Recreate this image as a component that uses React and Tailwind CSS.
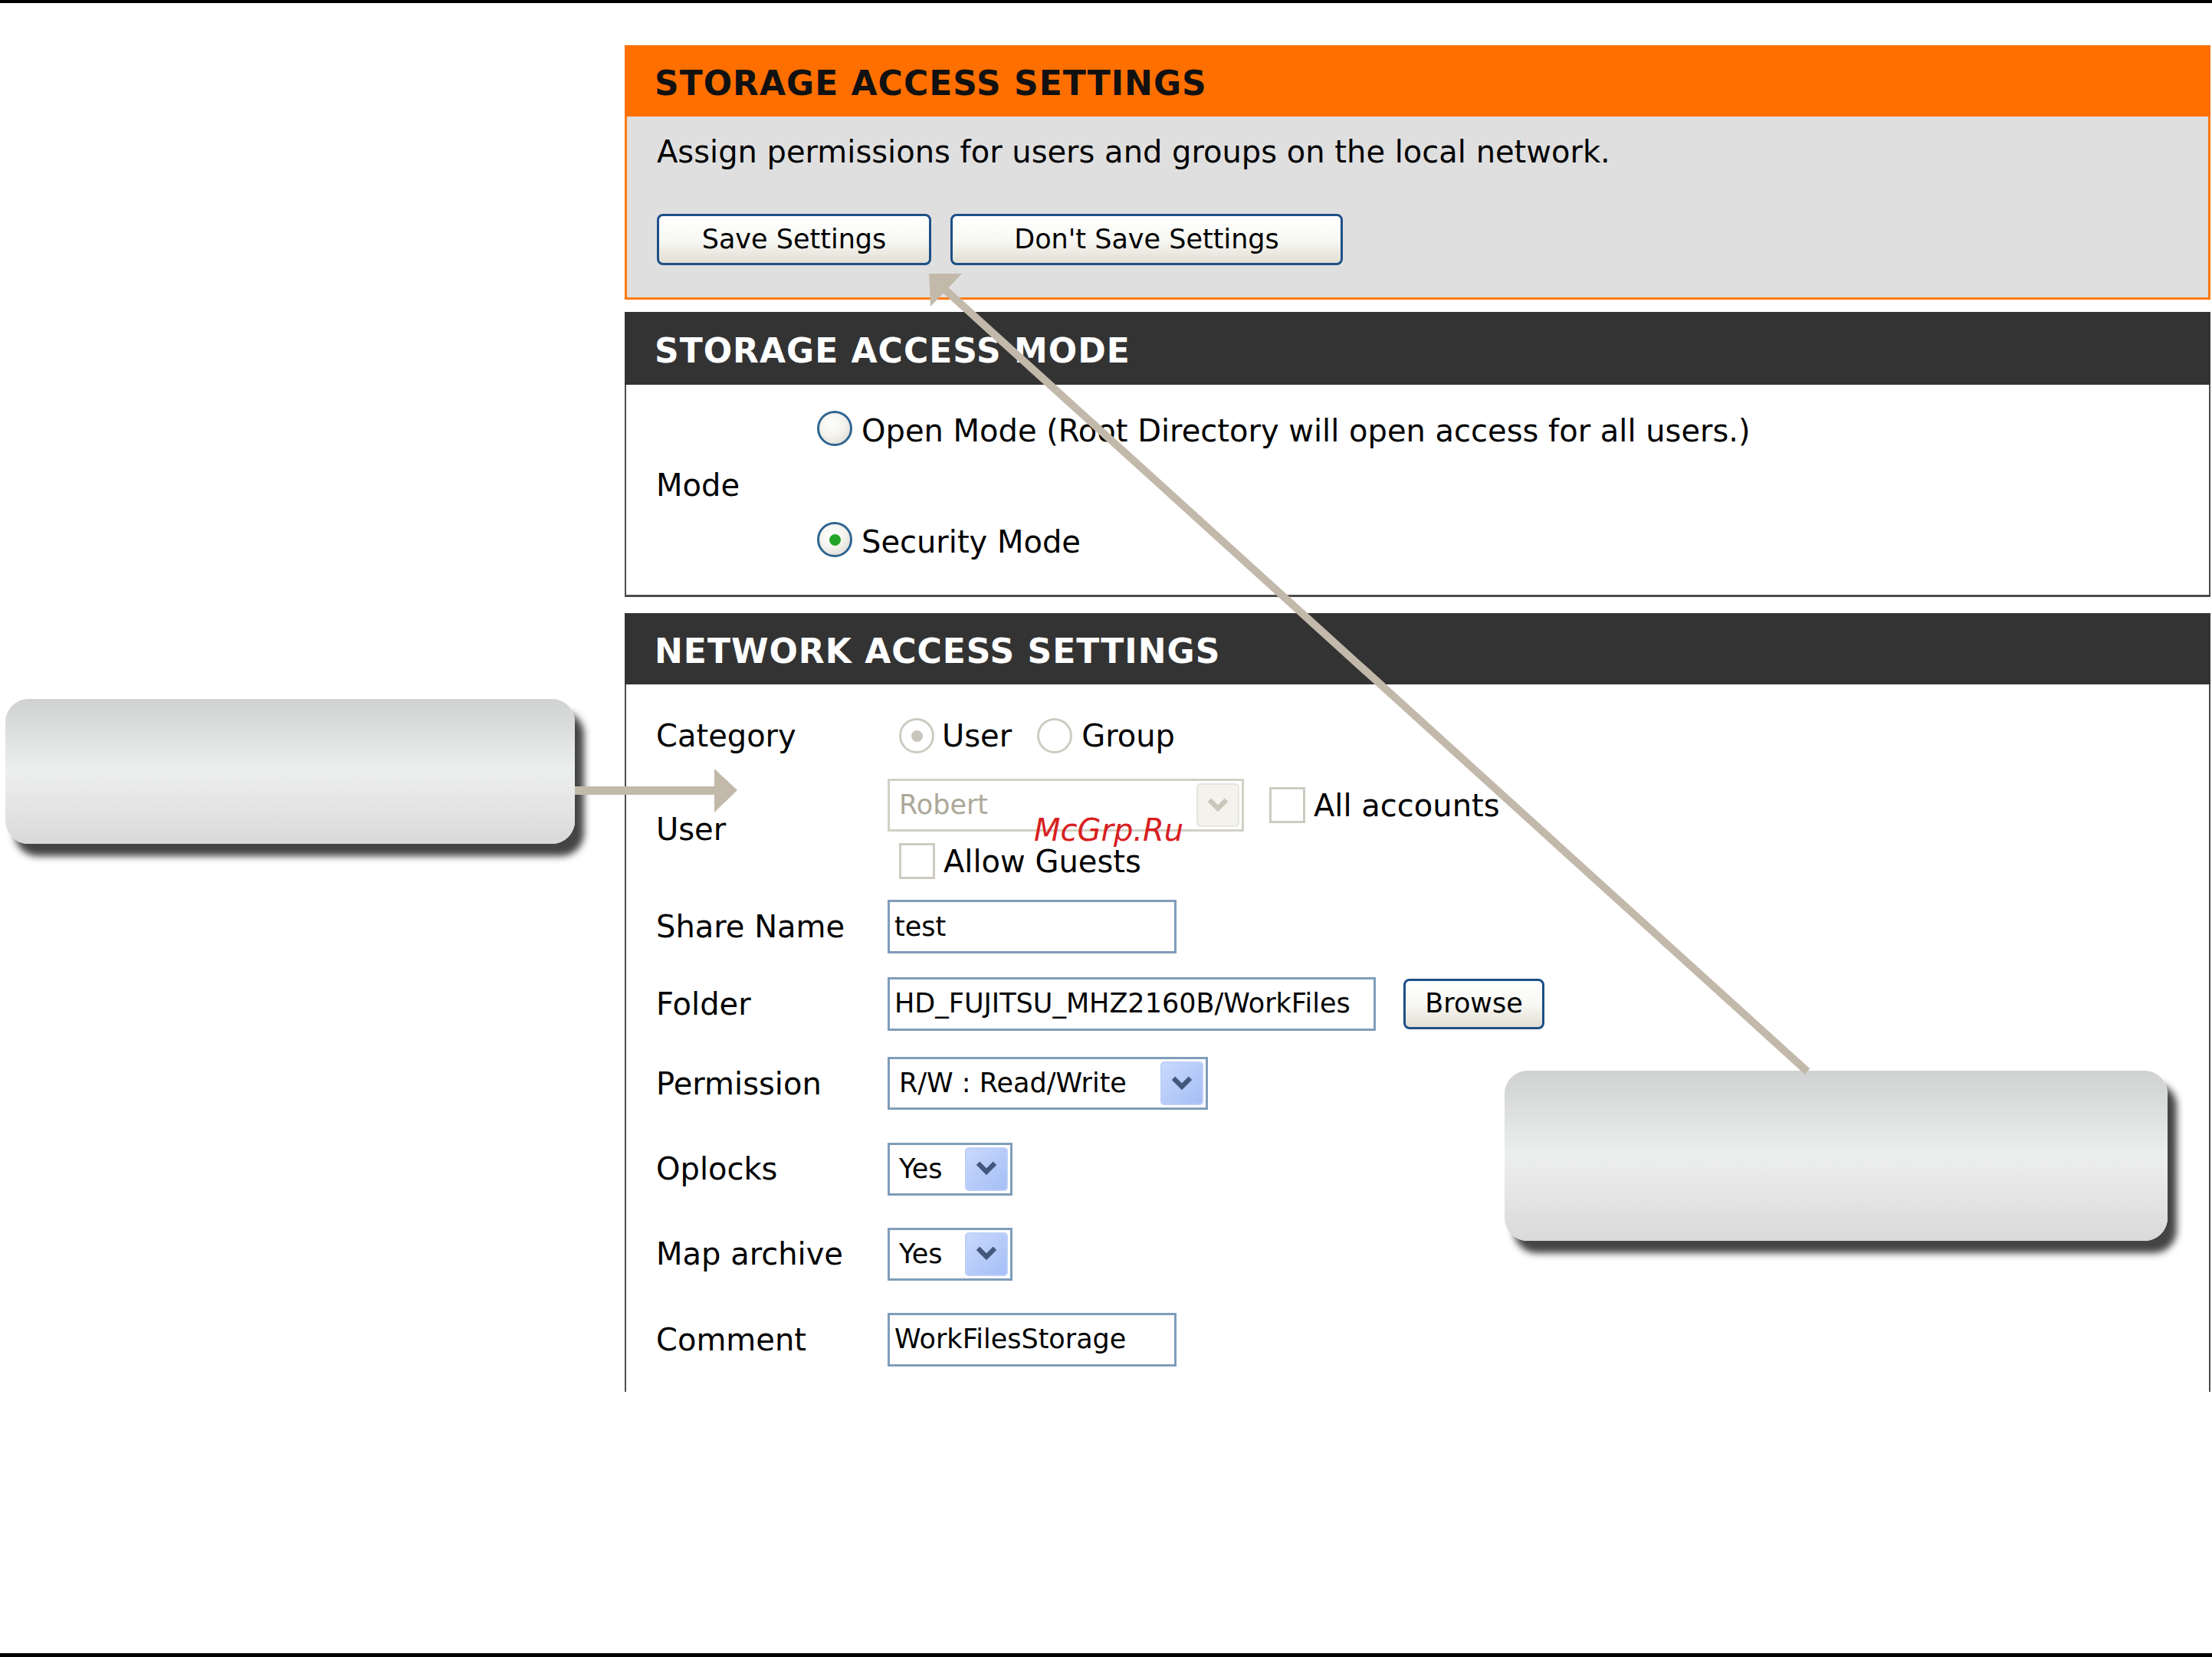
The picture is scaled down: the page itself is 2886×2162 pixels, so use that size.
import React from "react";

const FONT = { fontFamily: '"DejaVu Sans", Verdana, sans-serif' };

function Title({ children }) {
  return (
    <h2 className="text-[44px] font-bold tracking-[1px] leading-none pt-[6px]">
      {children}
    </h2>
  );
}

function Radio({ checked, disabled }) {
  const ring = disabled
    ? "border-[#cdcbc0] bg-white"
    : "border-[#2f6490] bg-[radial-gradient(circle_at_40%_35%,#ffffff_0%,#f4f3ee_45%,#d6d4cb_100%)]";
  return (
    <span
      className={`w-[46px] h-[46px] rounded-full border-[3px] flex items-center justify-center shrink-0 ${ring}`}
    >
      {checked && (
        <span
          className={`w-[15px] h-[15px] rounded-full ${
            disabled ? "bg-[#c8c6bc]" : "bg-[#22a529]"
          }`}
        />
      )}
    </span>
  );
}

function Checkbox() {
  return (
    <span className="block w-[47px] h-[47px] border-[3px] border-[#cdcbc0] bg-white shrink-0" />
  );
}

function Chevron({ color }) {
  return (
    <svg viewBox="0 0 24 24" className="w-[30px] h-[30px]">
      <path d="M5 8 L12 15 L19 8" fill="none" stroke={color} strokeWidth="5" strokeLinecap="square" />
    </svg>
  );
}

function Select({ value, width, disabled }) {
  return (
    <div
      className={`h-[69px] border-[3px] flex items-center justify-between pl-[12px] pr-[3px] ${
        disabled ? "border-[#d2d0c4] bg-white" : "border-[#7f9db9] bg-white"
      }`}
      style={{ width }}
    >
      <span className={`text-[35px] leading-none ${disabled ? "text-[#aca899]" : "text-black"}`}>
        {value}
      </span>
      <span
        className={`w-[56px] h-[57px] rounded-[5px] flex items-center justify-center ${
          disabled
            ? "bg-[#f3f2ec] border-2 border-[#e6e5dd]"
            : "bg-gradient-to-br from-[#c9d9fc] to-[#a5bef5] border-2 border-[#bccff9]"
        }`}
      >
        <Chevron color={disabled ? "#c9c7ba" : "#44577d"} />
      </span>
    </div>
  );
}

function Input({ value, width }) {
  return (
    <div
      className="h-[70px] border-[3px] border-[#7f9db9] bg-white flex items-center pl-[6px] overflow-hidden whitespace-nowrap"
      style={{ width }}
    >
      <span className="text-[35px] leading-none text-black">{value}</span>
    </div>
  );
}

function XpButton({ children, className = "" }) {
  return (
    <button
      className={`border-[3px] border-[#1d4f86] rounded-[8px] bg-gradient-to-b from-white via-[#f8f8f4] to-[#e2dfd3] text-[35px] leading-none text-black flex items-center justify-center ${className}`}
    >
      {children}
    </button>
  );
}

function Row({ label, top, height, children }) {
  return (
    <div className="flex items-center" style={{ marginTop: top, height }}>
      <div className="w-[302px] shrink-0 text-[40px] leading-none">{label}</div>
      {children}
    </div>
  );
}

export default function App() {
  return (
    <div className="relative w-[2886px] h-[2162px] bg-white text-black overflow-hidden" style={FONT}>
      <div className="h-[4px] bg-black" />

      <div className="ml-[815px] mt-[55px] w-[2069px]">
        {/* storage access settings */}
        <div className="h-[93px] bg-[#ff6f00] flex items-center pl-[39px] text-[#111]">
          <Title>STORAGE ACCESS SETTINGS</Title>
        </div>
        <div className="h-[239px] bg-[#dfdfdf] border-x-[3px] border-b-[3px] border-[#ff7a12] pl-[39px] pt-[22px]">
          <p className="text-[40px] leading-[48px]">
            Assign permissions for users and groups on the local network.
          </p>
          <div className="flex gap-[25px] mt-[57px]">
            <XpButton className="w-[358px] h-[67px]">Save Settings</XpButton>
            <XpButton className="w-[512px] h-[67px]">Don't Save Settings</XpButton>
          </div>
        </div>

        {/* storage access mode */}
        <div className="mt-[16px] h-[95px] bg-[#333333] flex items-center pl-[39px] text-white">
          <Title>STORAGE ACCESS MODE</Title>
        </div>
        <div className="h-[277px] border-x-2 border-b-[3px] border-[#4d4d4d] pl-[39px] pt-[33px] flex items-start">
          <div className="w-[210px] shrink-0 text-[40px] leading-none mt-[78px]">Mode</div>
          <div className="flex flex-col gap-[97px]">
            <label className="flex items-center gap-[12px] h-[48px] text-[40px] leading-none">
              <Radio />
              <span className="pt-[5px]">Open Mode (Root Directory will open access for all users.)</span>
            </label>
            <label className="flex items-center gap-[12px] h-[48px] text-[40px] leading-none">
              <Radio checked />
              <span className="pt-[5px]">Security Mode</span>
            </label>
          </div>
        </div>

        {/* network access settings */}
        <div className="mt-[21px] h-[93px] bg-[#333333] flex items-center pl-[39px] text-white">
          <Title>NETWORK ACCESS SETTINGS</Title>
        </div>
        <div className="h-[923px] border-x-2 border-[#4d4d4d] pl-[39px] flex flex-col">
          <Row label="Category" top={44} height={46}>
            <div className="flex items-center pl-[15px] text-[40px] leading-none">
              <Radio checked disabled />
              <span className="ml-[10px]">User</span>
              <span className="ml-[33px]">
                <Radio disabled />
              </span>
              <span className="ml-[12px]">Group</span>
            </div>
          </Row>

          <Row label="User" top={32} height={133}>
            <div className="flex flex-col gap-[15px]">
              <div className="flex items-center">
                <Select value="Robert" width={465} disabled />
                <span className="ml-[33px]">
                  <Checkbox />
                </span>
                <span className="ml-[11px] text-[40px] leading-none">All accounts</span>
              </div>
              <div className="flex items-center pl-[15px]">
                <Checkbox />
                <span className="ml-[11px] text-[40px] leading-none">Allow Guests</span>
              </div>
            </div>
          </Row>

          <Row label="Share Name" top={26} height={70}>
            <Input value="test" width={377} />
          </Row>

          <Row label="Folder" top={30} height={71}>
            <Input value="HD_FUJITSU_MHZ2160B/WorkFiles" width={637} />
            <XpButton className="ml-[36px] w-[184px] h-[66px]">Browse</XpButton>
          </Row>

          <Row label="Permission" top={34} height={69}>
            <Select value="R/W : Read/Write" width={418} />
          </Row>

          <Row label="Oplocks" top={42} height={70}>
            <Select value="Yes" width={163} />
          </Row>

          <Row label="Map archive" top={41} height={70}>
            <Select value="Yes" width={163} />
          </Row>

          <Row label="Comment" top={41} height={71}>
            <Input value="WorkFilesStorage" width={377} />
          </Row>
        </div>
      </div>

      <div className="absolute left-0 right-0 bottom-0 h-[5px] bg-black" />

      {/* callout boxes */}
      <div className="absolute left-[7px] top-[912px] w-[743px] h-[189px] rounded-[30px] bg-gradient-to-b from-[#d0d1d1] via-[#edefee] to-[#d9d9d9] shadow-[12px_16px_10px_rgba(35,35,35,0.85)]" />
      <div className="absolute left-[1963px] top-[1397px] w-[865px] h-[222px] rounded-[30px] bg-gradient-to-b from-[#d0d1d1] via-[#edefee] to-[#d9d9d9] shadow-[12px_16px_10px_rgba(35,35,35,0.85)]" />

      {/* arrows */}
      <svg className="absolute inset-0 w-full h-full pointer-events-none" viewBox="0 0 2886 2162">
        <rect x="750" y="1026" width="184" height="11" fill="#c2b9ab" />
        <polygon points="932,1003 962,1031 932,1060" fill="#c2b9ab" />
        <line x1="1232" y1="377" x2="2358" y2="1398" stroke="#c2b9ab" strokeWidth="10" />
        <polygon points="1212,357 1255,357 1214,400" fill="#c2b9ab" />
      </svg>

      <span className="absolute left-[1349px] top-[1059px] text-[40px] leading-[48px] italic text-[#d8201f]">
        McGrp.Ru
      </span>
    </div>
  );
}
